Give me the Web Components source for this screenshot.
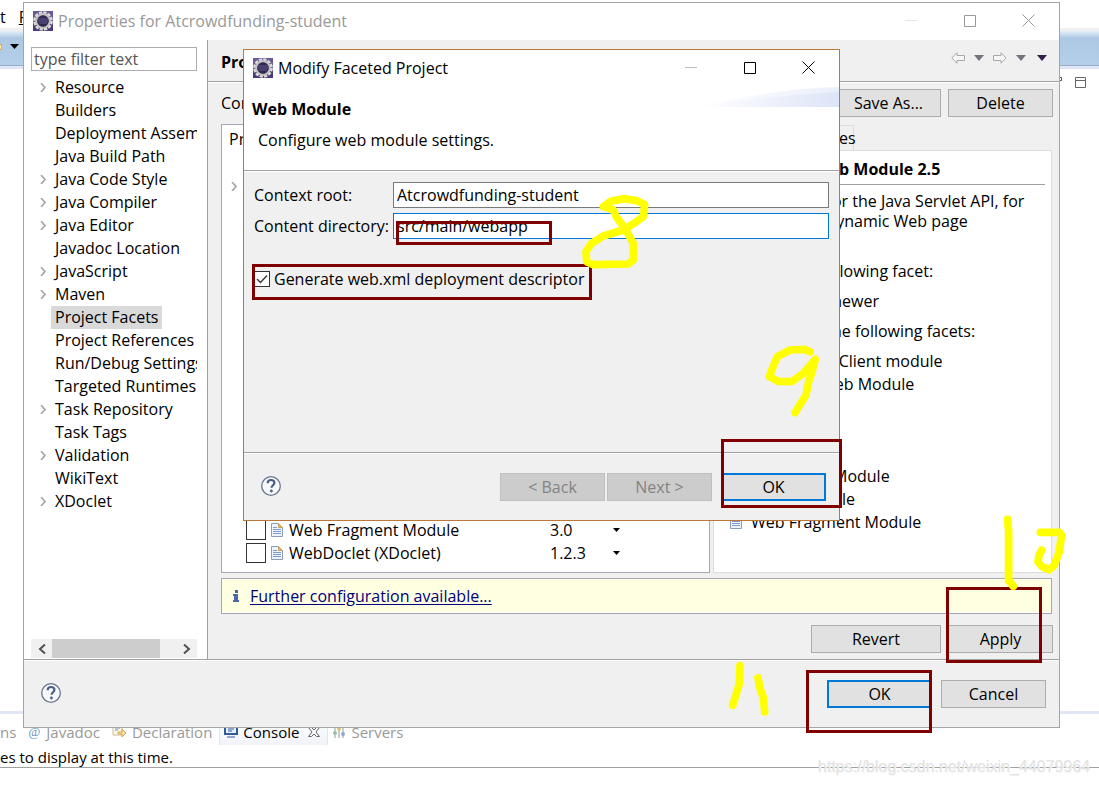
<!DOCTYPE html>
<html lang="en">
<head>
<meta charset="utf-8">
<title>Properties for Atcrowdfunding-student</title>
<style>
html,body{margin:0;height:100%;overflow:hidden;background:#fff;color:#000;font:16px/20px "Open Sans","Noto Sans",sans-serif}
</style>
</head>
<body>
<ide-desktop></ide-desktop>
<script>
function define(name, html) {
  const t = document.createElement('template');
  t.innerHTML = '<style>*{box-sizing:border-box}:host{display:block;box-sizing:border-box}button,input{font:inherit;color:inherit;margin:0}button{border:0;background:none;padding:0}svg{display:block;flex:none}</style>' + html;
  customElements.define(name, class extends HTMLElement {
    connectedCallback() {
      if (this.shadowRoot) return;
      const root = this.attachShadow({mode: 'open'});
      root.append(t.content.cloneNode(true));
      const text = root.querySelector('[data-field]');
      if (text) { text.value = this.getAttribute('value'); root.querySelector('label').textContent = this.getAttribute('label'); }
      if (this.hasAttribute('disabled')) root.querySelector('button').disabled = true;
      for (const el of root.querySelectorAll('[data-label]')) el.setAttribute('aria-label', this.getAttribute('label') || 'Item');
    }
  });
}

define('eclipse-icon', `<style>:host{width:20px;height:20px}</style>
<svg width="20" height="20" viewBox="0 0 20 20"><rect width="20" height="20" fill="#6a5a98"/><rect y="12" width="20" height="8" fill="#4c3a78"/>
<circle cx="10" cy="10" r="8.300" fill="none" stroke="#dedcd8" stroke-width="3" stroke-dasharray="3.200 1.146"/>
<circle cx="10" cy="10" r="6.800" fill="#3b3264" stroke="#c4c1c0" stroke-width="2.200"/><circle cx="10" cy="10" r="5.600" fill="#30284d"/>
<path d="M5 8h10M5 10h10M6 12h8" stroke="#65569a"/></svg>`);

define('page-icon', `<style>:host{width:12px;height:14px}</style>
<svg width="12" height="14" viewBox="0 0 12 14"><path d="M.5.5h7l4 4v9H.5z" fill="#eef3fc" stroke="#8a9cc0"/><path d="M7.500.500v4h4z" fill="#e0bd6c" stroke="#c3a25a"/><path d="M2 4.500h4M2 6.500h8M2 8.500h8M2 10.500h8" stroke="#7e9bd0"/></svg>`);

define('help-button', `<style>:host{width:20px;height:20px}button{display:block}</style>
<button aria-label="Help"><svg width="20" height="20" viewBox="0 0 20 20"><circle cx="10" cy="10" r="9.300" fill="#f7f8fb" stroke="#68768f" stroke-width="1.300"/><path d="M6.600 7.200C6.700 4.900 8.200 4 10 4c2 0 3.400 1 3.400 2.800 0 2.400-2.900 2.500-2.900 5" fill="none" stroke="#4a5f87" stroke-width="2.200"/><circle cx="10.400" cy="15" r="1.400" fill="#4a5f87"/></svg></button>`);

define('ui-button', `<style>:host{width:105px;height:28px;flex:none}:host([wide]){width:130px}
button{display:block;width:100%;height:100%;background:#e1e1e1;border:1px solid #adadad}
:host([primary]) button{border:2px solid #0078d7}
button:disabled{background:#ccc;border-color:#bfbfbf;color:#838383}</style><button><slot></slot></button>`);

define('ui-window', `<style>:host{display:flex;flex-direction:column;border:1px solid #a5a5a5;background:#f0f0f0;--tone:#000}
:host([inactive]){--tone:#999}
header{display:flex;align-items:center;height:37px;flex:none;background:#fff;padding:0 1px 2px 9px;gap:5px;color:var(--tone)}
.title{flex:1;white-space:nowrap}.controls{display:flex}.controls button{width:59px;height:35px;display:grid;place-items:center;color:var(--tone)}
.controls button:first-child{opacity:.25}
.controls svg{fill:none;stroke:currentColor}</style>
<header><eclipse-icon></eclipse-icon><span class="title"><slot name="title"></slot></span>
<span class="controls"><button aria-label="Minimize"><svg width="12" height="12"><path d="M0 5.500h12"/></svg></button><button aria-label="Maximize"><svg width="12" height="12"><path d="M.5.5h11v11H.5z"/></svg></button><button aria-label="Close"><svg width="13" height="13"><path d="M.5.5l12 12M12.500.500l-12 12"/></svg></button></span></header>
<slot></slot>`);

define('window-footer', `<style>:host{display:flex;align-items:center;border-top:1px solid #a0a0a0;box-shadow:inset 0 1px #fff;height:68px;flex:none;padding:0 13px 0 17px}
help-button{margin-bottom:2px}.actions{margin-left:auto;display:flex}</style><help-button></help-button><div class="actions"><slot></slot></div>`);

define('tree-item', `<style>:host{display:flex;height:23px;align-items:center;white-space:nowrap}
i{width:20px;flex:none;padding-left:9px}i svg{visibility:hidden}:host([branch]) i svg{visibility:visible}
span{padding:0 4px;line-height:23px}:host([selected]) span{background:#d9d9d9}</style>
<i><svg width="7" height="9" viewBox="0 0 7 9"><path d="M1 0l4 4.500L1 9" fill="none" stroke="#a6a6a6" stroke-width="1.700"/></svg></i><span><slot></slot></span>`);

define('page-tree', `<style>:host{display:flex;flex-direction:column;width:184px;flex:none;background:#fff;border-right:1px solid #a0a0a0;padding:7px 10px 1px 7px}
input{width:100%;height:24px;border:1px solid #abadb3;padding:0 2px;border-radius:0;outline:0;background:#fff}input::placeholder{color:#555;opacity:1}
.items{flex:1;overflow:hidden;padding-top:5px}
.bar{display:flex;height:19px;background:#f0f0f0;width:166px}.bar button{width:21px;display:grid;place-items:center}.track{flex:1}.thumb{width:108px;height:100%;background:#cdcdcd}
.bar svg{fill:none;stroke:#505050;stroke-width:2}</style>
<input aria-label="Filter" placeholder="type filter text">
<div class="items">
<tree-item branch>Resource</tree-item><tree-item>Builders</tree-item><tree-item>Deployment Assem</tree-item><tree-item>Java Build Path</tree-item><tree-item branch>Java Code Style</tree-item><tree-item branch>Java Compiler</tree-item><tree-item branch>Java Editor</tree-item><tree-item>Javadoc Location</tree-item><tree-item branch>JavaScript</tree-item><tree-item branch>Maven</tree-item><tree-item selected>Project Facets</tree-item><tree-item>Project References</tree-item><tree-item>Run/Debug Settings</tree-item><tree-item>Targeted Runtimes</tree-item><tree-item branch>Task Repository</tree-item><tree-item>Task Tags</tree-item><tree-item branch>Validation</tree-item><tree-item>WikiText</tree-item><tree-item branch>XDoclet</tree-item>
</div>
<div class="bar"><button aria-label="Scroll left"><svg width="8" height="10"><path d="M7 .5L2 5l5 4.500"/></svg></button><div class="track"><div class="thumb"></div></div><button aria-label="Scroll right"><svg width="8" height="10"><path d="M1 .5L6 5 1 9.500"/></svg></button></div>`);

define('facet-row', `<style>:host{display:flex;height:23px;align-items:center;padding-left:24px}
input{appearance:none;width:20px;height:20px;border:1px solid #333;background:#fff;margin-right:5px;flex:none}
.name{width:267px;padding-left:6px}.version{width:63px}</style>
<input type="checkbox" data-label><page-icon></page-icon><span class="name"><slot></slot></span><span class="version"><slot name="version"></slot></span><svg width="7" height="4"><path d="M0 0h7L3.500 4z"/></svg>`);

define('facet-list', `<style>:host{display:flex;flex-direction:column;flex:1;background:#fff;border:1px solid #a5a8b0;padding:3px 0 8px;min-width:0}
.head{padding:0 7px;line-height:23px}.first{margin-top:24px}.rows{margin-top:auto}</style>
<div class="head">Project Facet</div><tree-item class="first" branch></tree-item>
<div class="rows"><facet-row label="Web Fragment Module">Web Fragment Module<span slot="version">3.0</span></facet-row><facet-row label="WebDoclet (XDoclet)">WebDoclet (XDoclet)<span slot="version">1.2.3</span></facet-row></div>`);

define('module-item', `<style>:host{display:flex;align-items:center;height:23px;gap:9px;padding-left:8px;white-space:nowrap}</style><page-icon></page-icon><slot></slot>`);

define('facet-details', `<style>:host{display:flex;flex-direction:column;flex:0 1 339px;min-width:0}
.tabs{display:flex;height:26px;padding-top:1px}.tabs button{border:1px solid #dcdcdc;border-bottom:0;width:71px;text-align:right}.tabs button+button{width:70px}
.pane{flex:1;background:#fff;border:1px solid #dcdcdc;padding:8px 6px 0 8px;overflow:hidden;white-space:nowrap}
h2{display:flex;gap:6px;font:inherit;font-weight:700;margin:0;height:26px;line-height:21px;border-bottom:1px solid #a0a0a0}h2 page-icon{margin-top:4px}
p{margin:0}.about{padding:6px 0 30px}.gap{padding-bottom:8px}.need{margin-bottom:9px}</style>
<div class="tabs"><button>Details</button><button>Runtimes</button></div>
<div class="pane"><h2><page-icon></page-icon>Dynamic Web Module 2.5</h2>
<p class="about">Adds support for the Java Servlet API, for<br>generation of dynamic Web page</p>
<p class="gap">Requires the following facet:</p><module-item class="need">Java 1.5 or newer</module-item>
<p class="gap">Conflicts with the following facets:</p>
<module-item>Application Client module</module-item><module-item>Dynamic Web Module</module-item><module-item>EAR</module-item><module-item>EAR</module-item><module-item>EAR</module-item><module-item>Connector Module</module-item><module-item>Utility Module</module-item><module-item>Web Fragment Module</module-item></div>`);

define('facets-page', `<style>:host{display:flex;flex-direction:column;flex:1;min-width:0}
.head{display:flex;align-items:center;height:43px;border-bottom:1px solid #fff;box-shadow:inset 0 -1px #a0a0a0;padding:0 12px 6px 13px}
h1{font:inherit;font-weight:700;margin:0;flex:1;padding-top:7px}.nav{display:flex;gap:9px;align-items:center}.nav button{display:block}
.config{display:flex;gap:7px;padding:6px 6px 7px 13px;align-items:center}.config label{flex:1}
.cols{display:flex;gap:3px;padding:0 7px 5px 13px;flex:1;min-height:0}
.info{display:flex;align-items:center;gap:11px;height:36px;margin:0 7px 0 13px;background:#ffffe1;border:1px solid #a5a8b0;box-shadow:inset 0 -1px #fff;padding-left:11px}
a{color:#00007f;text-underline-offset:2px}.buttons{display:flex;justify-content:flex-end;gap:7px;padding:11px 6px 6px}</style>
<div class="head"><h1>Project Facets</h1><div class="nav">
<button aria-label="Back"><svg width="14" height="12"><path d="M.8 6L6 .8V3.500h7.500v5H6v2.700z" fill="#f6f6f6" stroke="#a9a9a9"/></svg></button><button aria-label="Back history"><svg width="10" height="6"><path d="M0 0h10L5 6z" fill="#77737c"/></svg></button><button aria-label="Forward"><svg width="14" height="12"><path d="M13.200 6L8 .8V3.500H.5v5H8v2.700z" fill="#f6f6f6" stroke="#a9a9a9"/></svg></button><button aria-label="Forward history"><svg width="10" height="6"><path d="M0 0h10L5 6z" fill="#77737c"/></svg></button><button aria-label="Menu"><svg width="12" height="6"><path d="M2 0h10L7 6z" fill="#32204c"/></svg></button></div></div>
<div class="config"><label>Configuration:</label><ui-button>Save As...</ui-button><ui-button>Delete</ui-button></div>
<div class="cols"><facet-list></facet-list><facet-details></facet-details></div>
<div class="info"><svg width="6" height="12"><path d="M2 0h3v3H2zM0 4h5v6h1v2H0v-2h1V6H0z" fill="#4a68ac"/></svg><a href="#further">Further configuration available...</a></div>
<div class="buttons"><ui-button wide>Revert</ui-button><ui-button>Apply</ui-button></div>`);

define('text-field', `<style>:host{display:flex;height:26px;align-items:center}label{width:139px;flex:none;white-space:nowrap}input{flex:1;min-width:0;height:26px;border:1px solid #7a7a7a;background:#fff;padding:0 3px;outline:0;border-radius:0}:host([active]) input{border-color:#0078d7}</style><label for="f"></label><input id="f" data-field>`);

define('module-wizard', `<style>:host{display:flex;flex-direction:column;flex:1}
.banner{background:#fff;height:85px;border-bottom:1px solid #fff;box-shadow:inset 0 -1px #a0a0a0;padding:12px 8px 0;position:relative}
.banner svg{position:absolute;right:0;top:0}h2{font:inherit;font-weight:700;margin:0 0 11px}p{margin:0;padding-left:6px}
.form{flex:1;padding:10px 10px 0;display:flex;flex-direction:column;gap:5px}
.check{display:flex;align-items:center;gap:4px;padding-top:25px}
.check input{appearance:none;width:16px;height:16px;border:1px solid #333;background:#fff url("data:image/svg+xml,%3Csvg xmlns='http://www.w3.org/2000/svg' viewBox='0 0 14 14'%3E%3Cpath d='M2 7l3.500 3.500L12 3.500' fill='none' stroke='%23333' stroke-width='1.400'/%3E%3C/svg%3E")}
.ok{margin-left:9px}.next{margin-left:2px}</style>
<div class="banner"><svg width="140" height="21" viewBox="0 0 140 21"><defs><linearGradient id="g"><stop offset="0" stop-color="#fff"/><stop offset="1" stop-color="#dde4f7"/></linearGradient></defs><path d="M0 20Q70 2 140 0v20z" fill="url(#g)" opacity=".6"/><path d="M0 20Q70 9 140 5v15z" fill="url(#g)"/></svg><h2>Web Module</h2><p>Configure web module settings.</p></div>
<div class="form"><text-field label="Context root:" value="Atcrowdfunding-student"></text-field><text-field active label="Content directory:" value="src/main/webapp"></text-field>
<div class="check"><input id="gen" type="checkbox" checked><label for="gen">Generate web.xml deployment descriptor</label></div></div>
<window-footer><ui-button disabled>&lt; Back</ui-button><ui-button class="next" disabled>Next &gt;</ui-button><ui-button class="ok" primary>OK</ui-button></window-footer>`);

define('ide-frame', `<style>:host{display:flex;flex-direction:column;height:100%;background:#fff}
.menu{height:28px;display:flex;gap:13px;padding-top:7px}
.tools{height:41px;border-top:3px solid #f0f0f0;border-bottom:3px solid #e1e6f6;background:linear-gradient(#e4f0fa,#adc8e2 7px,#b4cfe9);box-shadow:inset 0 -1px #98aecb;display:flex;padding:12px 0 0;gap:8px;align-items:flex-start}
.editor{flex:1;border-bottom:3px solid #e1e6f6;display:flex;justify-content:flex-end;gap:13px;padding:8px 13px 0}
.tabs{height:31px;display:flex;align-items:flex-end;color:#999;white-space:nowrap;font-size:15px}
.tab{display:flex;align-items:center;height:27px;gap:6px;margin-right:12px}
.current{color:#000;background:linear-gradient(#fff,#f1f3f9);border:1px solid #e5e5ec;border-width:0 1px;padding:0 7px 0 4px;gap:5px;margin:0 5px 0 -5px}
.message{border-bottom:1px solid #a0a0a0;height:23px;line-height:24px;white-space:nowrap;font-size:15px}.rest{height:17px}</style>
<div class="menu"><span>t</span><u>R</u></div>
<div class="tools"><svg width="2" height="8"><circle cx="-1" cy="4" r="3" fill="#ffe5a8" stroke="#e79b2e"/></svg><svg width="10" height="6"><path d="M0 1h9L4.500 6z"/></svg></div>
<div class="editor"><svg width="4" height="4"><path d="M0 .5h3.500v3H0" fill="none" stroke="#555"/></svg><svg width="11" height="11"><path d="M.5.5h10v10H.5zM.5 3.500h10" fill="none" stroke="#666"/></svg></div>
<div class="tabs"><span class="tab">ns</span><span class="tab"><b style="font:italic 13px 'Liberation Serif',serif;color:#5f94bb">@</b>Javadoc</span>
<span class="tab"><svg width="14" height="13"><path d="M1 0h9v10H1z" fill="#faf7ea" stroke="#d4c08b"/><path d="M3 3h5M3 5h3" stroke="#7b91c0"/><path d="M6 7h4V4l4 4-4 4V9H6z" fill="#f6dda0" stroke="#d6a955"/></svg>Declaration</span>
<span class="tab current"><svg width="14" height="13"><path d="M1 1h12v8H1z" fill="#e5effd" stroke="#33589d" stroke-width="2"/><path d="M4 4h6M4 6h4M3 12h8" stroke="#33589d"/></svg>Console<svg width="16" height="10" viewBox="-4 0 16 10"><path d="M.5.5h3L6 3 8.500.500h3L8 5l3.500 4.500h-3L6 7 3.500 9.500h-3L4 5z" fill="none" stroke="#666"/></svg></span>
<span class="tab"><svg width="12" height="12"><path d="M2 0v12M6 0v12M10 2v10" stroke="#8d9aae"/><circle cx="2" cy="7" r="2" fill="#9cc49c"/><circle cx="6" cy="3" r="2" fill="#ddc178"/><circle cx="10" cy="8" r="2" fill="#91a8ca"/></svg>Servers</span></div>
<div class="message">es to display at this time.</div><div class="rest"></div>`);

define('pen-marks', `<style>:host{position:absolute;inset:0;pointer-events:none}svg{width:100%;height:100%}rect{fill:none;stroke:#800000;stroke-width:3}.pen{fill:none;stroke:#ff0;stroke-width:23;stroke-linecap:round;stroke-linejoin:round}</style>
<svg><rect x="397.500" y="222.500" width="153" height="21"/><rect x="253.500" y="265.500" width="337" height="33"/><rect x="722.500" y="440.500" width="118" height="66"/><rect x="947.500" y="588.500" width="93" height="73"/><rect x="807.500" y="671.500" width="123" height="60"/>
<g class="pen"><path transform="translate(370 170) scale(.3333)" d="M700 110L722 94 760 86 800 92 824 104 820 140 795 158 760 180 700 198 665 220 648 245 650 275 670 284 775 282 790 270 790 220 765 175 740 142 728 118z"/>
<path transform="translate(740 200) scale(.3333)" d="M210 456L195 448 150 450 112 470 95 510 88 530 115 544 155 545 190 520 226 478 215 520 206 545 198 585 165 638"/>
<path transform="translate(570 400) scale(.3374)" d="M1297 354L1300 390V535L1314 552M1394 392H1450L1457 400 1450 450 1435 490 1420 503 1400 495 1387 480 1390 460 1398 445"/>
<path transform="translate(740 580) scale(.3333)" d="M0 257L-2 312-22 376M54 294L60 325 70 352 74 396"/></g></svg>`);

define('ide-desktop', `<style>:host{position:relative;height:100vh;overflow:hidden}
.properties{position:absolute;left:23px;right:39px;top:2px;height:726px}
.wizard{position:absolute;left:243px;width:597px;top:49px;height:472px;border-color:#bb783c}
.body{display:flex;flex:1;min-height:0}.cancel{margin-left:9px}
.mark{position:absolute;right:9px;bottom:8px;color:#e2e2e2;font:16px/20px "Liberation Sans",sans-serif;text-shadow:1px 1px #f8f8f8}</style>
<ide-frame></ide-frame>
<ui-window class="properties" inactive><span slot="title">Properties for Atcrowdfunding-student</span>
<div class="body"><page-tree></page-tree><facets-page></facets-page></div>
<window-footer><ui-button primary>OK</ui-button><ui-button class="cancel">Cancel</ui-button></window-footer></ui-window>
<ui-window class="wizard"><span slot="title">Modify Faceted Project</span><module-wizard></module-wizard></ui-window>
<pen-marks></pen-marks><span class="mark">https://blog.csdn.net/weixin_44079964</span>`);
</script>
</body>
</html>
